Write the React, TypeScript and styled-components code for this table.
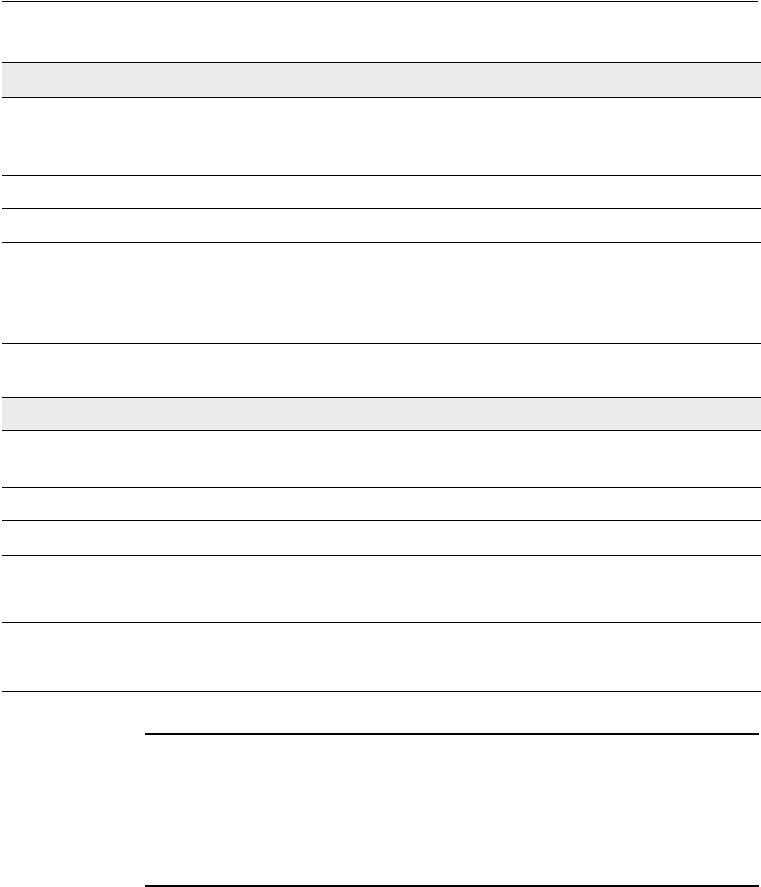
import React from "react";
import styled, { createGlobalStyle } from "styled-components";

const Global = createGlobalStyle`
  html, body { margin: 0; padding: 0; background: #ffffff; overflow: hidden; }
  body { font-family: "Liberation Sans", Arial, sans-serif; color: #000; }
`;

const Page = styled.div`
  display: flex;
  flex-direction: column;
  align-items: flex-start;
  padding: 1px 0 0 2px;
`;

const TopRule = styled.div`
  width: 756px;
  border-top: 1px solid #000;
`;

const Table = styled.div<{ $gap: number }>`
  display: flex;
  flex-direction: column;
  width: 759px;
  margin-top: ${(p) => p.$gap}px;
  border-top: 1px solid #000;
`;

const Row = styled.div<{ $h: number; $head?: boolean }>`
  height: ${(p) => p.$h}px;
  border-bottom: 1px solid #000;
  background: ${(p) => (p.$head ? "#ebebeb" : "transparent")};
`;

const Block = styled.div`
  margin: 41px 0 0 143px;
  width: 614px;
  height: 150px;
  border-top: 2px solid #000;
  border-bottom: 2px solid #000;
`;

const table1 = [77, 32, 33, 100];
const table2 = [56, 32, 34, 66, 68];

export default function App() {
  return (
    <>
      <Global />
      <Page>
        <TopRule />
        <Table $gap={60}>
          <Row $h={34} $head />
          {table1.map((h, i) => (
            <Row key={i} $h={h} />
          ))}
        </Table>
        <Table $gap={53}>
          <Row $h={32} $head />
          {table2.map((h, i) => (
            <Row key={i} $h={h} />
          ))}
        </Table>
        <Block />
      </Page>
    </>
  );
}
